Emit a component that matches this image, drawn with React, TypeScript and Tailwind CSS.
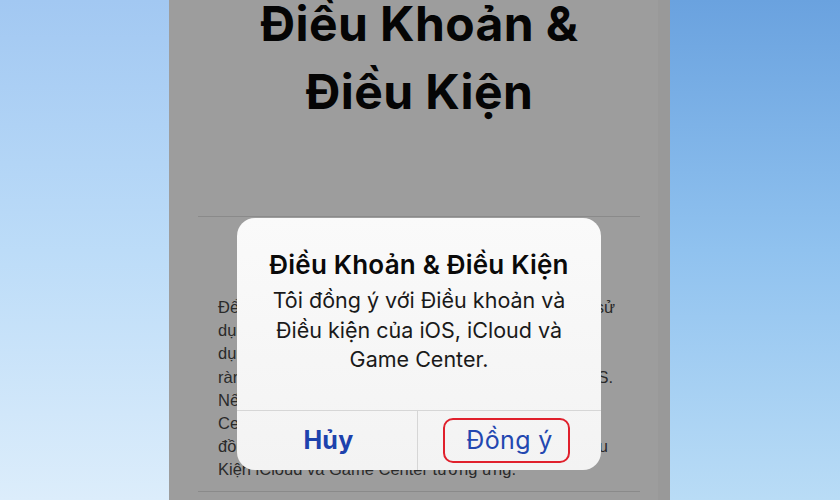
import React from "react";

const bodyLines: { text: string; w: string; justify: boolean }[] = [
  { text: "Để tiếp tục, bạn cần đồng ý với các điều khoản sử", w: "w-[397px]", justify: true },
  { text: "dụng. Bằng việc sử dụng thiết bị này, bạn đồng ý", w: "w-[370px]", justify: true },
  { text: "dụng các dịch vụ và chịu sự ràng buộc của các", w: "w-[370px]", justify: true },
  { text: "ràng buộc của Điều khoản và Điều kiện của iOS.", w: "w-[395px]", justify: true },
  { text: "Nếu bạn sử dụng iCloud hoặc Game", w: "w-[360px]", justify: true },
  { text: "Center, bạn cũng cần phải đọc và", w: "w-[360px]", justify: true },
  { text: "đồng ý với các Điều khoản và Điều", w: "w-[390px]", justify: true },
  { text: "Kiện iCloud và Game Center tương ứng.", w: "", justify: false },
];

export default function App() {
  return (
    <div className="flex h-[500px] w-[840px] overflow-hidden">
      <div className="h-full w-[169px] bg-gradient-to-b from-[#a2c8f2] via-[#bcdcf8] to-[#dcedfb]" />
      <div className="relative flex h-full w-[501px] bg-[#9d9d9d]">
        <div className="flex flex-1 flex-col items-center">
          <h1
            className="mt-[-10px] ml-[12px] text-center text-[48px] font-bold leading-[68px] tracking-[0.4px] text-[#050505]"
            style={{ fontFamily: "Inter, 'Liberation Sans', sans-serif" }}
          >
            Điều Khoản &amp;
            <br />
            Điều Kiện
          </h1>
          <div className="mt-[90px] h-px w-[442px] self-start ml-[29px] bg-[#8a8a8a]" />
          <div
            className="mt-[79px] self-start ml-[49px] flex flex-col text-[16.5px] leading-[23.2px] text-[#2a2a2a]"
            style={{ fontFamily: "'Liberation Sans', Arial, sans-serif" }}
          >
            {bodyLines.map((l, i) => (
              <div
                key={i}
                className={`whitespace-nowrap ${l.w} ${l.justify ? "text-justify [text-align-last:justify]" : ""}`}
              >
                {l.text}
              </div>
            ))}
          </div>
          <div className="mt-[9px] h-px w-[442px] self-start ml-[29px] bg-[#8a8a8a]" />
        </div>
        <div className="w-[12px] h-full bg-[#999999]" />

        {/* Alert dialog */}
        <div
          className="absolute left-[68px] top-[218px] flex h-[252px] w-[364px] flex-col overflow-hidden rounded-[18px] bg-gradient-to-b from-[#fafafa] to-[#f3f3f3]"
          style={{ fontFamily: "Inter, 'Liberation Sans', sans-serif" }}
        >
          <div className="flex h-[192px] flex-col items-center pt-[31px]">
            <div className="whitespace-nowrap text-[26px] font-semibold leading-[31px] tracking-[0.2px] text-[#0a0a0a]">
              Điều Khoản &amp; Điều Kiện
            </div>
            <div className="mt-[6px] whitespace-nowrap text-center text-[21.5px] leading-[29.5px] text-[#1a1a1a]">
              Tôi đồng ý với Điều khoản và
              <br />
              Điều kiện của iOS, iCloud và
              <br />
              Game Center.
            </div>
          </div>
          <div className="flex h-[60px] border-t border-[#d6d6d6]">
            <div className="flex flex-1 items-center justify-center border-r border-[#d6d6d6] pl-[3px]">
              <span className="text-[25px] font-bold tracking-[0.3px] text-[#1d42ad]">Hủy</span>
            </div>
            <div className="flex flex-1 items-center justify-center pr-[6px]">
              <span className="flex h-[45px] w-[127px] items-center justify-center rounded-[10px] border-2 border-[#e0202c] pl-[6px] text-[25px] tracking-[0.4px] text-[#2347b0]">
                Đồng ý
              </span>
            </div>
          </div>
        </div>
      </div>
      <div className="h-full flex-1 bg-gradient-to-b from-[#6aa2df] via-[#90c2ef] to-[#b9dcf6]" />
    </div>
  );
}
